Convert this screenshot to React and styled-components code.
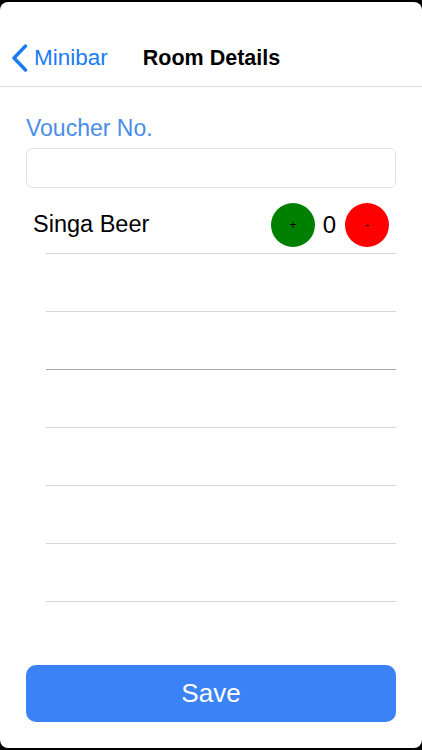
import React from 'react'
import styled, { createGlobalStyle } from 'styled-components'

const GlobalStyle = createGlobalStyle`
    html, body {
        margin: 0;
        padding: 0;
        background: #000;
    }
    * {
        box-sizing: border-box;
    }
`

const Screen = styled.div`
    margin: 2px 0;
    height: 746px;
    background: #fff;
    border-radius: 8px;
    display: flex;
    flex-direction: column;
    font-family: "Liberation Sans", Arial, sans-serif;
    overflow: hidden;
`

const NavBar = styled.header`
    height: 85px;
    border-bottom: 1px solid #dcdcdc;
    display: flex;
    align-items: flex-end;
    padding: 0 0 6px 11px;
`

const NavRow = styled.div`
    height: 44px;
    display: flex;
    align-items: center;
`

const BackButton = styled.button`
    display: flex;
    align-items: center;
    gap: 6px;
    border: 0;
    background: none;
    padding: 0;
    color: #1a7cf5;
    font-family: inherit;
    font-size: 22.5px;
    cursor: pointer;
`

const NavTitle = styled.h1`
    margin: 0 0 0 35px;
    font-size: 21.5px;
    font-weight: 700;
    color: #000;
`

const Content = styled.main`
    padding: 28px 26px 0;
    display: flex;
    flex-direction: column;
`

const Label = styled.label`
    font-size: 23px;
    color: #4a8de8;
    line-height: 27px;
    margin-bottom: 6px;
`

const Input = styled.input`
    height: 40px;
    border: 1px solid #e2e2e2;
    border-radius: 6px;
    font-size: 18px;
    padding: 0 10px;
    outline: none;
`

const List = styled.div`
    margin-top: 8px;
`

const Cell = styled.div`
    height: 57px;
    display: flex;
    align-items: center;
    padding: 0 7px;
`

const ItemName = styled.span`
    flex: 1;
    font-size: 23.5px;
    color: #000;
`

const Circle = styled.button`
    width: 44px;
    height: 44px;
    border-radius: 50%;
    border: 0;
    padding: 0;
    background: ${p => p.$color};
    color: #000;
    font-family: inherit;
    font-size: 12px;
    line-height: 1;
`

const Count = styled.span`
    font-size: 24px;
    margin: 0 8px 0 7px;
    width: 15px;
    text-align: center;
`

const Divider = styled.div`
    height: 1px;
    margin-left: 20px;
    background: ${p => (p.$dark ? '#a8a8a8' : '#d6d6d6')};
`

const Footer = styled.footer`
    margin-top: auto;
    padding: 0 26px 26px;
`

const SaveButton = styled.button`
    width: 100%;
    height: 57px;
    border: 0;
    border-radius: 10px;
    background: #3b82f6;
    color: #fff;
    font-family: inherit;
    font-size: 26px;
    cursor: pointer;
`

const Chevron = () => (
    <svg width="17" height="28" viewBox="0 0 17 28">
        <path d="M14.5 2 L3 14 L14.5 26" fill="none" stroke="#1a7cf5" strokeWidth="3.4" strokeLinecap="round" strokeLinejoin="round" />
    </svg>
)

const App = () => {
    const rows = [0, 1, 2, 3, 4, 5, 6]

    return (
        <>
            <GlobalStyle />
            <Screen>
                <NavBar>
                    <NavRow>
                        <BackButton>
                            <Chevron />
                            Minibar
                        </BackButton>
                        <NavTitle>Room Details</NavTitle>
                    </NavRow>
                </NavBar>
                <Content>
                    <Label>Voucher No.</Label>
                    <Input />
                    <List>
                        {rows.map(i => (
                            <React.Fragment key={i}>
                                <Cell>
                                    {i === 0 && (
                                        <>
                                            <ItemName>Singa Beer</ItemName>
                                            <Circle $color='#008000'>+</Circle>
                                            <Count>0</Count>
                                            <Circle $color='#ff0000'>-</Circle>
                                        </>
                                    )}
                                </Cell>
                                <Divider $dark={i === 2} />
                            </React.Fragment>
                        ))}
                    </List>
                </Content>
                <Footer>
                    <SaveButton>Save</SaveButton>
                </Footer>
            </Screen>
        </>
    )
}

export default App
